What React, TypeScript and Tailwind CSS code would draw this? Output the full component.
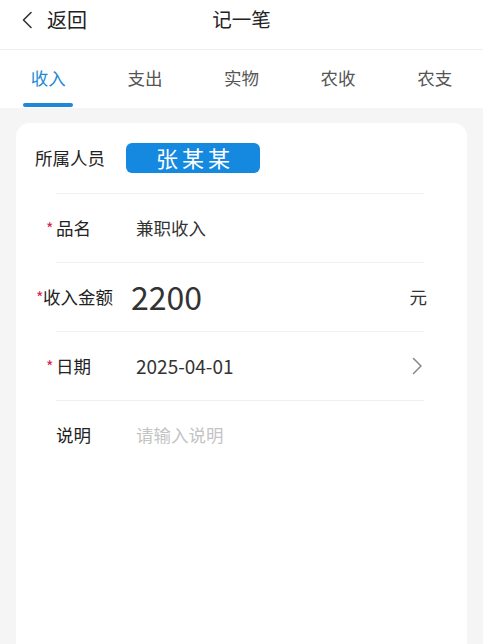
const tabs = ['收入', '支出', '实物', '农收', '农支'];

function Star({ left }: { left: string }) {
    return <span className={`absolute ${left} top-[1px] text-[16px] text-[#d6244a]`}>*</span>;
}

export default function App() {
    return (
        <div className="w-[483px] h-[644px] flex flex-col bg-[#f5f5f5] overflow-hidden" style={{ fontFamily: '"Noto Sans CJK SC", "Noto Sans", sans-serif' }}>
            {/* header */}
            <div className="h-[50px] shrink-0 bg-white border-b border-[#efefef] relative flex items-center justify-center">
                <div className="absolute left-[21px] top-0 h-[40px] flex items-center gap-[14px] text-[#222]">
                    <svg width="12" height="18" viewBox="0 0 12 18" fill="none">
                        <path d="M10 1.5 L2.5 9 L10 16.5" stroke="#333" strokeWidth="1.6" strokeLinecap="round" strokeLinejoin="round" />
                    </svg>
                    <span className="text-[20px]">返回</span>
                </div>
                <span className="text-[19.5px] text-[#222] -mt-[11px]">记一笔</span>
            </div>

            {/* tabs */}
            <div className="h-[58px] shrink-0 bg-white flex">
                {tabs.map((t, i) => (
                    <div key={t} className="flex-1 relative flex items-center justify-center">
                        <span className={`text-[17.5px] -mt-[1px] ${i === 0 ? 'text-[#1f8ad6]' : 'text-[#555]'}`}>{t}</span>
                        {i === 0 && <div className="absolute bottom-[1px] left-[23px] w-[50px] h-[4px] rounded-full bg-[#1f88d6]" />}
                    </div>
                ))}
            </div>

            {/* card */}
            <div className="flex-1 px-[16px] pt-[15px]">
                <div className="h-full bg-white rounded-t-[14px] flex flex-col">
                    <div className="h-[70px] shrink-0 flex items-center pl-[19px] text-[17.5px] text-[#222]">
                        <span>所属人员</span>
                        <div className="ml-[21px] w-[134px] h-[30px] rounded-[6px] bg-[#1589e0] flex items-center justify-center text-white text-[22px] tracking-[4px] pl-[4px] -mt-[1px]">
                            张某某
                        </div>
                    </div>

                    <div className="ml-[40px] mr-[43px] border-t border-[#f0f0f0]">
                        <div className="h-[69px] flex items-center border-b border-[#f0f0f0]">
                            <div className="relative w-[80px] text-[17.5px] text-[#222]">
                                <Star left="-left-[10px]" />
                                品名
                            </div>
                            <span className="text-[17.5px] text-[#333]">兼职收入</span>
                        </div>

                        <div className="h-[69px] flex items-center border-b border-[#f0f0f0]">
                            <div className="relative w-[75px] -ml-[13px] mr-[13px] text-[17.5px] text-[#222]">
                                <Star left="-left-[7px]" />
                                收入金额
                            </div>
                            <span className="text-[32px] text-[#333] leading-none -mt-[2px]">2200</span>
                            <span className="ml-auto -mr-[3px] text-[17.5px] text-[#333]">元</span>
                        </div>

                        <div className="h-[69px] flex items-center border-b border-[#f0f0f0]">
                            <div className="relative w-[80px] text-[17.5px] text-[#222]">
                                <Star left="-left-[10px]" />
                                日期
                            </div>
                            <span className="text-[19px] text-[#333]">2025-04-01</span>
                            <svg className="ml-auto mr-[1px]" width="12" height="18" viewBox="0 0 12 18" fill="none">
                                <path d="M2.5 1.5 L10 9 L2.5 16.5" stroke="#888" strokeWidth="1.5" strokeLinecap="round" strokeLinejoin="round" />
                            </svg>
                        </div>

                        <div className="h-[69px] flex items-center">
                            <div className="relative w-[80px] text-[17.5px] text-[#222]">说明</div>
                            <span className="text-[17.5px] text-[#c4c4c4]">请输入说明</span>
                        </div>
                    </div>
                </div>
            </div>
        </div>
    );
}
